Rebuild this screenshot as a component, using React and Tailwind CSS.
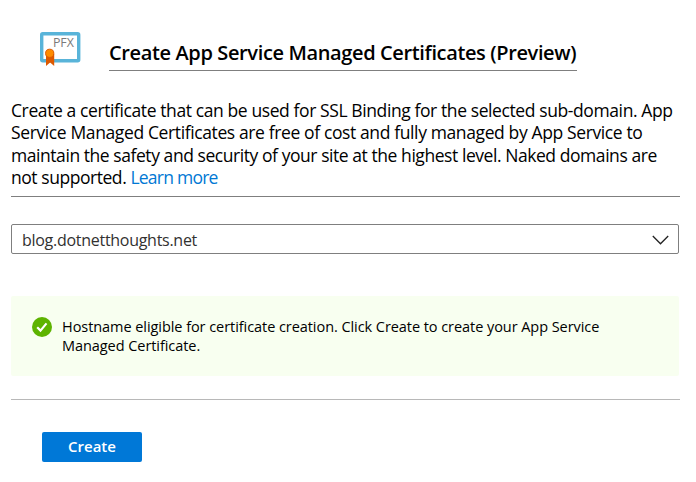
function CertificateIcon() {
  return (
    <svg className="h-[36px] w-[42px] shrink-0" viewBox="0 0 42 36" fill="none">
      <rect x="1.7" y="1.7" width="37" height="27" rx="1" fill="#fff" stroke="#59b4d9" strokeWidth="3.4" strokeLinejoin="round" />
      <text x="12.9" y="15.4" fontSize="12.6" textLength="21" lengthAdjust="spacingAndGlyphs" fill="#7a7a7a" fontFamily="Open Sans, Noto Sans, sans-serif">PFX</text>
      <path d="M6 22h8.2v12l-4.1-3.4L6 34z" fill="#dd5900" />
      <circle cx="9.7" cy="21.3" r="4.1" fill="#ff8c00" stroke="#dd5900" strokeWidth="1" />
    </svg>
  );
}

export default function App() {
  return (
    <main className="h-[482px] w-[696px] bg-white pl-[11px] font-['Open_Sans','Noto_Sans',sans-serif] text-black">
      <header className="flex h-[71px] items-start pl-[29px] pt-[32px]">
        <CertificateIcon />
        <h1 className="ml-[27px] mt-[8px] h-[31px] w-[468px] whitespace-nowrap border-b border-[#7f7f7f] text-[20px] leading-[26px] font-semibold tracking-[-0.37px]">
          Create App Service Managed Certificates (Preview)
        </h1>
      </header>

      <p className="mt-[28px] h-[98px] w-[669px] whitespace-nowrap border-b border-[#7f7f7f] text-[17.5px] leading-[22.3px]">
        <span className="block tracking-[-0.4px]">Create a certificate that can be used for SSL Binding for the selected sub-domain. App</span>
        <span className="block tracking-[-0.38px]">Service Managed Certificates are free of cost and fully managed by App Service to</span>
        <span className="block tracking-[-0.44px]">maintain the safety and security of your site at the highest level. Naked domains are</span>
        <span className="block tracking-[-0.45px]">not supported. <a className="tracking-[-0.75px] text-[#0078d4]">Learn more</a></span>
      </p>

      <div className="mt-[27px] flex h-[30px] w-[668px] items-center justify-between rounded-[2px] border border-[#7f7f7f] pl-[10px] pr-[9px] text-[16px] tracking-[-0.28px] text-[#323130]">
        <span className="pt-[2px]">blog.dotnetthoughts.net</span>
        <svg className="mt-px h-[10px] w-[17px]" viewBox="0 0 17 10" fill="none">
          <path d="M.8 1l7.7 7.8L16.2 1" stroke="#222" strokeWidth="1.3" />
        </svg>
      </div>

      <section className="mt-[42px] flex h-[80px] w-[668px] rounded-[2px] bg-[#f8fff0] pl-[21px] pt-[21px]">
        <svg className="h-[20px] w-[20px] shrink-0" viewBox="0 0 20 20" fill="none">
          <circle cx="10" cy="10" r="10" fill="#5db300" />
          <path d="M5.2 10.2l3.3 3.4 6-7.2" stroke="#fff" strokeWidth="2.2" />
        </svg>
        <p className="ml-[10px] whitespace-nowrap text-[14.5px] leading-[19px] tracking-[-0.06px]">
          <span className="block">Hostname eligible for certificate creation. Click Create to create your App Service</span>
          <span className="block">Managed Certificate.</span>
        </p>
      </section>

      <footer className="mt-[23px] w-[669px] border-t border-[#b8b8b8] pl-[31px] pt-[32px]">
        <button className="flex h-[30px] w-[100px] items-start justify-center rounded-[2px] bg-[#0078d7] pt-[3px] text-[15px] leading-[22px] font-semibold text-white">Create</button>
      </footer>
    </main>
  );
}
